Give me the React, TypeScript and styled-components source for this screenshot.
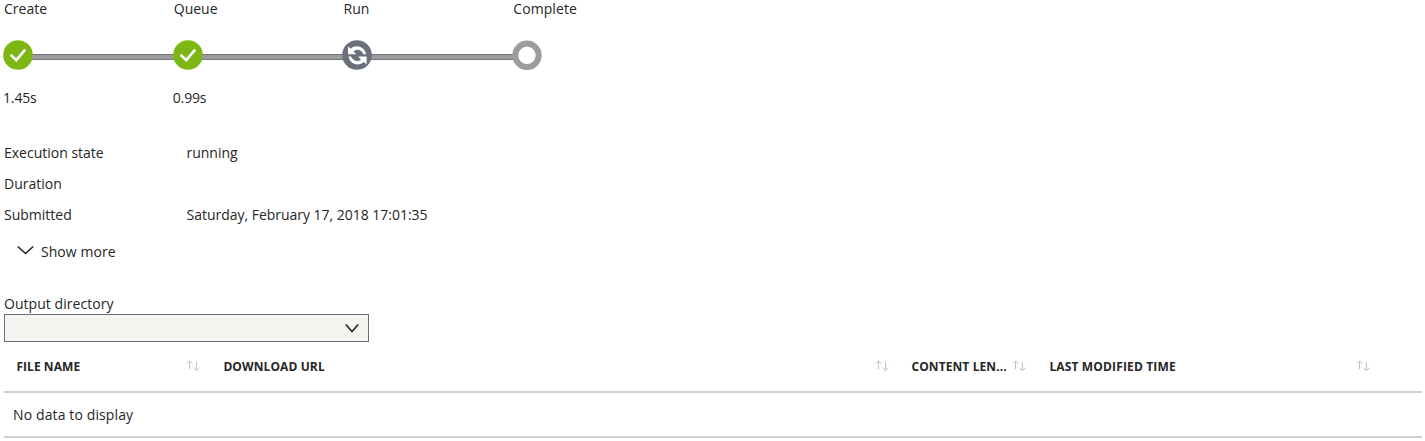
import React from "react";
import styled, { createGlobalStyle } from "styled-components";

const GlobalStyle = createGlobalStyle`
  * { box-sizing: border-box; }
  body {
    margin: 0;
    background: #fff;
    color: #262626;
    font-family: "Open Sans", "Noto Sans", sans-serif;
    font-size: 14px;
    line-height: 20px;
  }
`;

const Page = styled.main`
  display: flex;
  flex-direction: column;
  height: 441px;
  padding: 0 3px 0 4px;
  overflow: hidden;
`;

const Text = styled.span<{ $spacing?: number }>`
  white-space: nowrap;
  letter-spacing: ${(p) => p.$spacing ?? 0}px;
`;

const Steps = styled.section`
  display: flex;
  height: 143px;
`;

const Step = styled.div<{ $last?: boolean }>`
  display: flex;
  flex-direction: column;
  width: ${(p) => (p.$last ? 80 : 169.75)}px;
`;

const StepTitle = styled.div`
  height: 40px;
  line-height: 18px;
`;

const Track = styled.div`
  display: flex;
  align-items: center;
  height: 30px;
  margin-left: -1.2px;
`;

const Connector = styled.div`
  flex: 1;
  height: 6px;
  margin: 3px -2px 0 -1px;
  border: solid #74747e;
  border-width: 1px 0;
  background: #9c9c9e;
`;

const StepTime = styled.div`
  margin: 18px 0 0 -1px;
`;

const Details = styled.dl`
  display: grid;
  grid-template-columns: 182.5px auto;
  grid-auto-rows: 31px;
  height: 93px;
  margin: 0;
`;

const Term = styled.dt``;

const Value = styled.dd`
  margin: 0;
`;

const ShowMore = styled.div`
  display: flex;
  gap: 7px;
  height: 52px;
  padding: 6px 0 0 13px;
`;

const Field = styled.div`
  display: flex;
  flex-direction: column;
  padding-top: 6px;
`;

const SelectBox = styled.div`
  display: flex;
  align-items: center;
  justify-content: flex-end;
  width: 365px;
  height: 28px;
  padding-right: 9px;
  border: 1px solid #6c6d78;
  background: #f4f4f1;
`;

const Table = styled.div`
  display: flex;
  flex-direction: column;
`;

const HeaderRow = styled.div`
  display: grid;
  grid-template-columns: 207px 688px 138px auto;
  height: 51px;
  padding-top: 16px;
  border-bottom: 2px solid #cfcfcf;
  font-size: 12px;
  font-weight: 700;
  line-height: 18px;
`;

const HeaderCell = styled.div<{ $end: number }>`
  display: flex;
  justify-content: space-between;
  padding: 0 ${(p) => p.$end}px 0 12.4px;
`;

const EmptyRow = styled.div`
  height: 45px;
  padding: 12px 9px 0;
  border-bottom: 2px solid #cfcfcf;
`;

const Icon = styled.svg`
  position: relative;
  z-index: 1;
  flex: none;
`;

const SortGlyph = styled.svg`
  flex: none;
  margin-top: 2px;
`;

const Check = () => (
  <Icon width="30" height="30" viewBox="0 0 30 30">
    <circle cx="15" cy="15" r="14.8" fill="#7cb714" />
    <path d="M7.6 14.8 13.3 20.2 22.2 9.6" fill="none" stroke="#fff" strokeWidth="2.6" />
  </Icon>
);

const Running = () => (
  <Icon width="30" height="30" viewBox="0 0 30 30">
    <circle cx="15" cy="15" r="14.8" fill="#6b707c" />
    <g fill="#fff">
      <path d="M6 6.2 8.7 8.7C14 4 22.6 6.3 24 14.2H21.6C19.6 9.6 14.8 8.4 11.6 11.4L14.4 14.2H6Z" />
      <path d="M24.6 24.6 21.9 22.1C16.6 26.8 8 24.5 6.6 16.6H9C11 21.2 15.8 22.4 19 19.4L16.2 16.6H24.6Z" />
    </g>
  </Icon>
);

const Pending = () => (
  <Icon width="30" height="30" viewBox="0 0 30 30">
    <circle cx="15" cy="15.3" r="11.7" fill="#fff" stroke="#9c9c9e" strokeWidth="6" />
  </Icon>
);

const Chevron = ({ width = 14 }: { width?: number }) => (
  <svg width={width} height="16" viewBox={`0 0 ${width} 16`}>
    <path
      d={`M.8 4.5 ${width / 2} 11.5 ${width - 0.8} 4.5`}
      fill="none"
      stroke="#262626"
      strokeWidth="1.6"
    />
  </svg>
);

const SortIcon = () => (
  <SortGlyph width="14" height="12" viewBox="0 0 14 12">
    <g fill="none" stroke="#c2c2c2" strokeWidth="1">
      <path d="M3.5 9V1M.5 3.8 3.5 .8 6.5 3.8" />
      <path d="M10.5 2V10.5M7.5 7.7 10.5 10.7 13.5 7.7" />
    </g>
  </SortGlyph>
);

const steps = [
  { title: "Create", time: "1.45s", icon: <Check />, spacing: 0 },
  { title: "Queue", time: "0.99s", icon: <Check />, spacing: 0 },
  { title: "Run", time: "", icon: <Running />, spacing: 0 },
  { title: "Complete", time: "", icon: <Pending />, spacing: 0.08 },
];

const details = [
  { term: "Execution state", value: "running" },
  { term: "Duration", value: "" },
  { term: "Submitted", value: "Saturday, February 17, 2018 17:01:35" },
];

const columns = [
  { label: "FILE NAME", end: 11, spacing: 0.06 },
  { label: "DOWNLOAD URL", end: 10, spacing: 0.1 },
  { label: "CONTENT LEN...", end: 11, spacing: 0.1 },
  { label: "LAST MODIFIED TIME", end: 52, spacing: 0.15 },
];

export default function App() {
  return (
    <>
      <GlobalStyle />
      <Page>
        <Steps>
          {steps.map((s, i) => (
            <Step key={s.title} $last={i === steps.length - 1}>
              <StepTitle>
                <Text $spacing={s.spacing}>{s.title}</Text>
              </StepTitle>
              <Track>
                {s.icon}
                {i < steps.length - 1 && <Connector />}
              </Track>
              <StepTime>
                <Text $spacing={-0.15}>{s.time}</Text>
              </StepTime>
            </Step>
          ))}
        </Steps>
        <Details>
          {details.map((d) => (
            <React.Fragment key={d.term}>
              <Term>
                <Text>{d.term}</Text>
              </Term>
              <Value>
                <Text $spacing={-0.02}>{d.value}</Text>
              </Value>
            </React.Fragment>
          ))}
        </Details>
        <ShowMore>
          <Chevron width={17} />
          <Text $spacing={0.05}>Show more</Text>
        </ShowMore>
        <Field>
          <Text $spacing={0.05}>Output directory</Text>
          <SelectBox>
            <Chevron />
          </SelectBox>
        </Field>
        <Table>
          <HeaderRow>
            {columns.map((c) => (
              <HeaderCell key={c.label} $end={c.end}>
                <Text $spacing={c.spacing}>{c.label}</Text>
                <SortIcon />
              </HeaderCell>
            ))}
          </HeaderRow>
          <EmptyRow>
            <Text $spacing={0.12}>No data to display</Text>
          </EmptyRow>
        </Table>
      </Page>
    </>
  );
}
